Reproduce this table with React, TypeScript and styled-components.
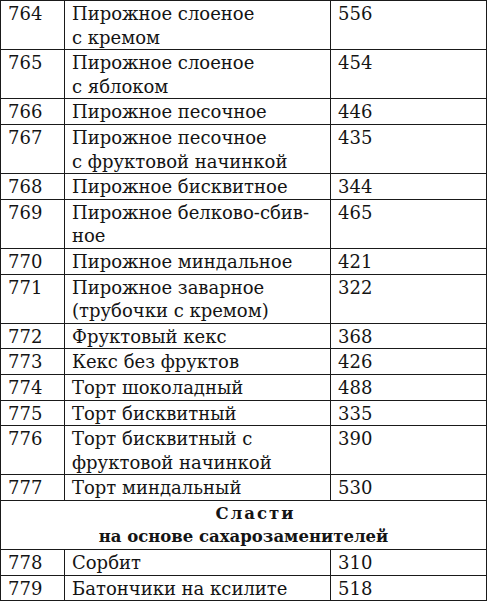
import React from 'react';
import styled, { createGlobalStyle } from 'styled-components';

const GlobalStyle = createGlobalStyle`
  html, body {
    margin: 0;
    padding: 0;
    background: #ffffff;
  }
`;

const Table = styled.table`
  width: 486px;
  border-collapse: collapse;
  table-layout: fixed;
  font-family: 'DejaVu Serif', 'Liberation Serif', serif;
  font-size: 18px;
  line-height: 23.6px;
  color: #141414;
`;

const Cell = styled.td<{ $bold?: boolean; $center?: boolean }>`
  border: 1px solid #1a1a1a;
  padding: 1px 7px 0;
  vertical-align: top;
  white-space: nowrap;
  text-align: ${p => (p.$center ? 'center' : 'left')};
  font-weight: ${p => (p.$bold ? 700 : 400)};
  font-size: ${p => (p.$bold ? '16.5px' : '18px')};
`;

const HeadLine = styled.span<{ $indent?: number; $spacing?: number }>`
  display: block;
  padding-left: ${p => p.$indent ?? 0}px;
  letter-spacing: ${p => p.$spacing ?? 0}px;
`;

interface Item {
  id: string;
  name: string[];
  kcal: string;
}

const before: Item[] = [
  { id: '764', name: ['Пирожное слоеное', 'с кремом'], kcal: '556' },
  { id: '765', name: ['Пирожное слоеное', 'с яблоком'], kcal: '454' },
  { id: '766', name: ['Пирожное песочное'], kcal: '446' },
  { id: '767', name: ['Пирожное песочное', 'с фруктовой начинкой'], kcal: '435' },
  { id: '768', name: ['Пирожное бисквитное'], kcal: '344' },
  { id: '769', name: ['Пирожное белково-сбив-', 'ное'], kcal: '465' },
  { id: '770', name: ['Пирожное миндальное'], kcal: '421' },
  { id: '771', name: ['Пирожное заварное', '(трубочки с кремом)'], kcal: '322' },
  { id: '772', name: ['Фруктовый кекс'], kcal: '368' },
  { id: '773', name: ['Кекс без фруктов'], kcal: '426' },
  { id: '774', name: ['Торт шоколадный'], kcal: '488' },
  { id: '775', name: ['Торт бисквитный'], kcal: '335' },
  { id: '776', name: ['Торт бисквитный с', 'фруктовой начинкой'], kcal: '390' },
  { id: '777', name: ['Торт миндальный'], kcal: '530' },
];

const after: Item[] = [
  { id: '778', name: ['Сорбит'], kcal: '310' },
  { id: '779', name: ['Батончики на ксилите'], kcal: '518' },
];

function ItemRow({ item }: { item: Item }) {
  return (
    <tr>
      <Cell>{item.id}</Cell>
      <Cell>
        {item.name.map((line, i) => (
          <React.Fragment key={i}>
            {i > 0 && <br />}
            {line}
          </React.Fragment>
        ))}
      </Cell>
      <Cell>{item.kcal}</Cell>
    </tr>
  );
}

export default function App() {
  return (
    <>
      <GlobalStyle />
      <Table>
        <colgroup>
          <col style={{ width: 64 }} />
          <col style={{ width: 266 }} />
          <col style={{ width: 156 }} />
        </colgroup>
        <tbody>
          {before.map(item => (
            <ItemRow key={item.id} item={item} />
          ))}
          <tr>
            <Cell colSpan={3} $bold $center>
              <HeadLine $indent={24} $spacing={2}>Сласти</HeadLine>
              <HeadLine>на основе сахарозаменителей</HeadLine>
            </Cell>
          </tr>
          {after.map(item => (
            <ItemRow key={item.id} item={item} />
          ))}
        </tbody>
      </Table>
    </>
  );
}
